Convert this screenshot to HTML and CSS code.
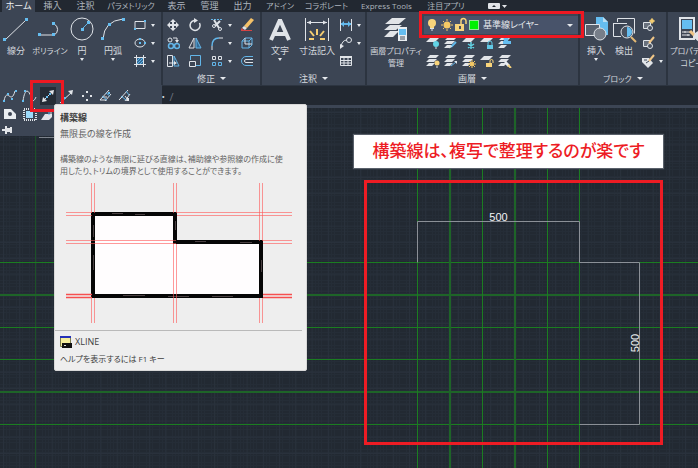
FILE: index.html
```html
<!DOCTYPE html>
<html lang="ja">
<head>
<meta charset="utf-8">
<title>構築線</title>
<link rel="stylesheet" href="styles.css">
</head>
<body>
<svg class="defs" aria-hidden="true">
  <symbol id="stack" viewBox="0 0 14 14"><path class="fw" d="M4 1h9l-3 3H1zM3 5h8l-3 3H0zM3 9h6l-3 3H0z"/></symbol>
  <symbol id="sheet" viewBox="0 0 14 14"><path class="fw" d="M4 2h9l-4 4H0z"/></symbol>
</svg>
<header class="ribbon">
  <nav class="tabs">
    <a class="tab active" href="#">ホーム</a>
    <a class="tab" href="#">挿入</a>
    <a class="tab" href="#">注釈</a>
    <a class="tab tight" href="#">パラメトリック</a>
    <a class="tab" href="#">表示</a>
    <a class="tab" href="#">管理</a>
    <a class="tab" href="#">出力</a>
    <a class="tab tight" href="#">アドイン</a>
    <a class="tab tight" href="#">コラボレート</a>
    <a class="tab tight" href="#">Express Tools</a>
    <a class="tab tight" href="#">注目アプリ</a>
    <button class="fold" aria-label="リボン"><svg width="20" height="8" viewBox="0 0 20 8"><rect class="fw" y="1" width="12" height="6" rx="1"/><path fill="#222831" d="M4 5h4L6 3z"/><path class="fw" d="M14 3h5l-2.500 3z"/></svg></button>
  </nav>
  <div class="panels">
    <section class="panel draw">
      <div class="tools">
        <button class="big w32"><svg width="26" height="26" viewBox="0 0 26 26"><path class="w" d="M2 23L23 3"/><path class="fb" d="M0 21h3v3H0zM22 1h3v3h-3z"/></svg><span>線分</span></button>
        <button class="big w36"><svg width="26" height="26" viewBox="0 0 26 26"><path class="w" d="M2 18h15a6 6 0 0 0 0-11"/><path class="fb" d="M1 16h3v3H1zM15 5h3v3h-3zM15 16h3v3h-3z"/></svg><span class="tight">ポリライン</span></button>
        <button class="big w28"><svg width="26" height="26" viewBox="0 0 26 26"><circle class="w" cx="13" cy="12" r="11"/><path class="b" d="M13 12l6-6"/><path class="fb" d="M12 11h3v3h-3zM18 4h3v3h-3z"/></svg><span>円</span><i class="caret"></i></button>
        <button class="big w34"><svg width="26" height="26" viewBox="0 0 26 26"><path class="w" d="M3 22Q4 4 23 2"/><path class="fb" d="M1 20h3v3H1zM8 6h3v3H8zM22 1h3v3h-3z"/></svg><span>円弧</span><i class="caret"></i></button>
        <div class="grid g1">
          <button><svg width="14" height="14" viewBox="0 0 14 14"><path class="w" d="M2 3.500h10v7H2z"/><path class="fb" d="M11 2h2v2h-2zM1 10h2v2H1z"/></svg><i class="caret"></i></button>
          <button><svg width="14" height="14" viewBox="0 0 14 14"><ellipse class="w" cx="7" cy="7" rx="5" ry="4"/><path class="fb" d="M6 6h2v2H6zM11 6h2v2h-2zM6 2h2v2H6z"/></svg><i class="caret"></i></button>
          <button><svg width="14" height="14" viewBox="0 0 14 14"><path fill="#356b96" d="M3 3h8v8H3z"/><path class="b" d="M3 8l5-5M3 11l8-8M6 11l5-5"/><path class="w" d="M3.500 1v12M10.500 1v12M1 3.500h12M1 10.500h12"/></svg><i class="caret"></i></button>
        </div>
      </div>
    </section>
    <section class="panel modify">
      <div class="tools">
        <div class="grid g4">
          <button aria-label="移動"><svg width="14" height="14" viewBox="0 0 14 14"><path class="w" stroke-width="2" d="M7 2v10M2 7h10"/><path class="fw" d="M7 1L4 4h6zM7 13l-3-3h6zM1 7l3-3v6zM13 7l-3-3v6z"/></svg></button>
          <button aria-label="回転"><svg width="14" height="14" viewBox="0 0 14 14"><path class="w" stroke-width="1.500" d="M6 2.500A5 5 0 1 0 11.500 5"/><path class="fw" d="M6 0l4 2.500L6 5z"/></svg></button>
          <button aria-label="トリム"><svg width="14" height="14" viewBox="0 0 14 14"><path class="b" stroke-dasharray="2 1" d="M1 1.500h12"/><path class="w" stroke-width="2" d="M4 2l5 8M10 3L5 8"/><circle class="w" cx="10" cy="11" r="1.500"/><circle class="w" cx="4" cy="8" r="1.500"/></svg><i class="caret"></i></button>
          <button aria-label="削除"><svg width="14" height="14" viewBox="0 0 14 14"><path fill="#f4c168" d="M11 0l3 2-7 8-3-2z"/><path class="fw" d="M4 8l3 2-2 2-3-2z"/><path fill="#d64343" d="M1 10l3 2-3 1z"/><path stroke="#d64343" d="M1 12.500h11"/></svg></button>
          <button aria-label="複写"><svg width="14" height="14" viewBox="0 0 14 14"><circle class="w" cx="4" cy="4" r="2"/><path class="w" d="M7 2h4v3"/><path class="fw" d="M9 4h4l-2 3z"/><circle class="b" stroke-width="1.500" cx="5" cy="10" r="2.500"/><circle class="b" stroke-width="1.500" cx="11" cy="10" r="2.500"/></svg></button>
          <button aria-label="鏡像"><svg width="14" height="14" viewBox="0 0 14 14"><path class="w" d="M6 2v10H1z"/><path class="b" fill="#356b96" d="M8 2v10h5z"/></svg></button>
          <button aria-label="フィレット"><svg width="14" height="14" viewBox="0 0 14 14"><path class="b" stroke-width="1.500" d="M2 10Q2 2 9 2"/><path class="w" d="M2 10v4M9 2h4"/></svg><i class="caret"></i></button>
          <button aria-label="分解"><svg width="14" height="14" viewBox="0 0 14 14"><path class="b" d="M2 5h7v7H2zM2 5l3-3h7L9 5M9 12l3-3V2"/><path class="w" d="M5 8h7M5 2v6"/></svg></button>
          <button aria-label="ストレッチ"><svg width="14" height="14" viewBox="0 0 14 14"><path class="w" d="M1.500 1.500h5v11h-5zM3 9h6"/><path class="b" d="M8 2l5 10H8z"/><path class="fw" d="M8 7l3 2-3 2z"/></svg></button>
          <button aria-label="尺度変更"><svg width="14" height="14" viewBox="0 0 14 14"><path class="b" d="M2.500 6V1.500h10v10H8"/><path class="w" d="M1.500 7.500h6v5h-6z"/></svg></button>
          <button aria-label="配列複写"><svg width="14" height="14" viewBox="0 0 14 14"><path class="w" d="M2.500 2.500h3v3h-3zM8.500 2.500h3v3h-3z"/><path class="b" d="M2.500 8.500h3v3h-3zM8.500 8.500h3v3h-3z"/></svg><i class="caret"></i></button>
          <button aria-label="オフセット"><svg width="14" height="14" viewBox="0 0 14 14"><path class="b" d="M13 2.500H6a4.500 4.500 0 0 0 0 9h7"/><path class="w" d="M13 5.500H6a1.500 1.500 0 0 0 0 3h7"/></svg></button>
        </div>
      </div>
      <button class="title">修正<i class="caret"></i></button>
    </section>
    <section class="panel note">
      <div class="tools">
        <button class="big w36"><svg width="26" height="26" viewBox="0 0 26 26"><path class="w" stroke-width="4" d="M4 23L12.500 4h1L22 23M7 17h12"/></svg><span>文字</span><i class="caret"></i></button>
        <button class="big w38"><svg width="26" height="26" viewBox="0 0 26 26"><path class="w" d="M1.500 1v23M24.500 1v23M3 5.500h20"/><path class="fw" d="M3 5.500l4-2v4zM23 5.500l-4-2v4z"/><path stroke="#f5ce72" stroke-width="2" d="M13 12v6M6 14l4 5M20 14l-4 5M5 22h5M21 22h-5"/></svg><span>寸法記入</span></button>
        <div class="grid g1">
          <button><svg width="14" height="14" viewBox="0 0 14 14"><path class="w" d="M1.500 1v12M12.500 1v12"/><path class="b" stroke-width="2" d="M2 6h10"/><path class="fb" d="M2 6l3-3v6zM12 6L9 3v6z"/></svg><i class="caret"></i></button>
          <button><svg width="14" height="14" viewBox="0 0 14 14"><circle class="w" cx="10" cy="4" r="2.500"/><path class="w" d="M8 4Q3 4 2 11"/><path class="fw" d="M1 13V8l4 2z"/></svg><i class="caret"></i></button>
          <button><svg width="14" height="14" viewBox="0 0 14 14"><path class="w" d="M1.500 2.500h11v9h-11zM1 6.500h12M1 9h12M5 4v8M9 4v8"/><path class="fw" d="M1 2h12v2H1z"/></svg></button>
        </div>
      </div>
      <button class="title">注釈<i class="caret"></i></button>
    </section>
    <section class="panel layer">
      <div class="tools">
        <button class="big w54"><svg width="26" height="26" viewBox="0 0 26 26"><path class="fw" d="M9 1h14l-7 6H2zM7 8h12l-6 5H1zM7 14h9l-6 6H1z"/><path fill="#e9edf1" d="M15 10h9v14h-9z"/><path class="fb" d="M16 12h7v6h-7z"/><path stroke="#49515e" d="M17 20h5M17 22h5"/></svg><span class="tight">画層プロパティ<br>管理</span></button>
        <div class="layers">
          <label class="combo">
            <svg width="48" height="16" viewBox="0 0 48 16"><circle cx="8" cy="6" r="4" fill="#f8d47b"/><path fill="#f8d47b" d="M6 8h4v3H6z"/><path class="w" d="M6 11.500h4M7 13h2"/><circle cx="23" cy="8" r="3.500" fill="#f5c965"/><path stroke="#f5c965" d="M23 2v2M23 12v2M17 8h2M27 8h2M19 4l1 1M27 4l-1 1M19 12l1-1M27 12l-1-1"/><path fill="#f8d47b" d="M31 7h9v7h-9z"/><path stroke="#f8d47b" stroke-width="1.500" fill="none" d="M37 7V4a2.200 2.200 0 0 1 5 0v3"/><path fill="#49515e" d="M35 9h2v3h-2z"/></svg>
            <i class="swatch"></i>
            <select aria-label="画層"><option>基準線レイヤｰ</option></select>
            <i class="caret"></i>
          </label>
          <div class="grid g5">
            <button><svg width="14" height="14"><use href="#sheet"/><circle cx="10" cy="8" r="3" fill="#62d3e5"/><path class="w" d="M9 12h2"/></svg></button>
            <button><svg width="14" height="14"><use href="#stack"/><path stroke="#5fb8e9" stroke-width="2" d="M7 11l5-5"/><path class="w" d="M5 12l3-2"/></svg></button>
            <button><svg width="14" height="14"><use href="#sheet"/><path stroke="#62d3e5" stroke-width="1.500" d="M9 6v7M6 8l6 4M6 12l6-4"/></svg></button>
            <button><svg width="14" height="14"><use href="#sheet"/><path fill="#62c8e5" d="M7 9h6v4H7z"/><path stroke="#62c8e5" fill="none" d="M8 9V7a2 2 0 0 1 4 0v2"/></svg></button>
            <button><svg width="14" height="14"><use href="#stack"/><circle class="fb" cx="8" cy="3" r="2.500"/><path class="fb" d="M5 5h8v3H5z"/></svg></button>
            <button><svg width="14" height="14"><use href="#stack"/><circle cx="11" cy="9" r="2.500" fill="#f8d47b"/><path class="w" d="M10 13h2"/></svg></button>
            <button><svg width="14" height="14"><use href="#stack"/><path class="b" d="M7 12l5-4"/><path class="fw" d="M10 7h3v3z"/></svg></button>
            <button><svg width="14" height="14"><use href="#stack"/><circle cx="10" cy="10" r="2" fill="#f5c965"/><path stroke="#f5c965" d="M10 6v8M6 10h8M7 7l6 6M13 7l-6 6"/></svg></button>
            <button><svg width="14" height="14"><use href="#sheet"/><path fill="#f8d47b" d="M6 9h6v4H6z"/><path stroke="#f8d47b" fill="none" d="M10 9V7a1.500 1.500 0 0 1 3 0v2"/></svg></button>
            <button><svg width="14" height="14"><use href="#stack"/><path stroke="#e9edf1" stroke-width="3" d="M7 8l4 4"/><path stroke="#f8d47b" stroke-width="2" d="M10 11l3 3"/></svg></button>
          </div>
        </div>
      </div>
      <button class="title">画層<i class="caret"></i></button>
    </section>
    <section class="panel block">
      <div class="tools">
        <button class="big w28"><svg width="26" height="26" viewBox="0 0 26 26"><path class="fb" d="M13 0h7l5 5v13H13z"/><path fill="#b8def3" d="M20 0l5 5h-5z"/><path class="w" fill="#59616e" d="M2.500 7.500h14v11h-14z"/><circle class="w" fill="#777e89" cx="17" cy="17" r="6"/></svg><span>挿入</span><i class="caret"></i></button>
        <button class="big w28"><svg width="26" height="26" viewBox="0 0 26 26"><path class="w" d="M6.500 5V1.500h17v15M2 6.500h14M2.500 6v13.500H10"/><circle class="w" fill="#49515e" cx="16" cy="15" r="6"/><path class="fb" d="M16 10a5 5 0 0 1 0 10z"/><path stroke="#e4b973" stroke-width="2" d="M20 20l5 5"/></svg><span>検出</span></button>
        <div class="grid g1">
          <button><svg width="14" height="14" viewBox="0 0 14 14"><path class="w" fill="#69717d" d="M2.500 4.500h7v6h-7z"/><circle class="w" fill="#49515e" cx="9" cy="10" r="2.500"/><circle cx="11" cy="3" r="2" fill="#f5ce72"/><path stroke="#f5ce72" d="M11 0v6M8 3h6"/></svg></button>
          <button><svg width="14" height="14" viewBox="0 0 14 14"><path class="w" fill="#69717d" d="M2.500 4.500h7v6h-7z"/><circle class="w" fill="#49515e" cx="9" cy="10" r="2.500"/><path stroke="#f0c687" stroke-width="2" d="M13 1L8 7"/></svg></button>
          <button><svg width="14" height="14" viewBox="0 0 14 14"><path class="fw" d="M1 4h7l4 5-5 5-6-6z"/><path stroke="#414b5a" d="M3 6h3M5 9l3-2"/><path stroke="#f0c687" stroke-width="2" d="M13 1L8 7"/></svg><i class="caret"></i></button>
        </div>
      </div>
      <button class="title tight">ブロック<i class="caret"></i></button>
    </section>
    <section class="panel props">
      <div class="tools">
        <button class="big w44"><svg width="26" height="26" viewBox="0 0 26 26"><path class="w" stroke-width="2" d="M3 1h14v21H3z"/><path class="fb" d="M5 3h10v9H5z"/><path class="w" d="M5 15h8M5 18h8M8 14v2M11 17v2"/><path stroke="#f0c687" stroke-width="3" d="M13 14l5 5"/><path class="fw" d="M18 16l3-2 5 6-4 5-6-5z"/></svg><span class="tight">プロパティｰ<br>コピｰ</span></button>
      </div>
    </section>
  </div>
  <div class="flyout">
    <div class="row">
      <button><svg width="16" height="16" viewBox="0 0 16 16"><path class="w" d="M2 13C5-2 9 18 13 3"/><path class="fb" d="M1 12h2v2H1zM5 5h2v2H5zM9 10h2v2H9zM13 2h2v2h-2z"/></svg></button>
      <button><svg width="16" height="16" viewBox="0 0 16 16"><path class="w" d="M2 13C4-1 8 2 10 9s4 2 5 0"/><path class="fb" d="M1 12h2v2H1zM3 2h2v2H3zM10 3h2v2h-2z"/></svg></button>
      <button class="on" aria-label="構築線"><svg width="16" height="16" viewBox="0 0 16 16"><path class="w" d="M3 13L13 3"/><path class="fw" d="M2 14l1-5 4 4zM14 2l-5 1 4 4z"/><path class="fb" d="M6 8h2v2H6zM9 5h2v2H9z"/></svg></button>
      <button><svg width="16" height="16" viewBox="0 0 16 16"><path class="w" d="M1 15L13 4"/><path class="fw" d="M14 2l-5 1 4 4z"/><path class="fb" d="M5 9h2v2H5z"/></svg></button>
      <button><svg width="16" height="16" viewBox="0 0 16 16"><path class="fw" d="M8 3h2v2H8zM4 7h2v2H4zM12 7h2v2h-2zM8 11h2v2H8z"/></svg></button>
      <button><svg width="16" height="16" viewBox="0 0 16 16"><path class="w" d="M3 12L12 2M8 13l6-7M3 12h7M5 9h5"/><path class="b" d="M5 8l5 4M9 5l4 3"/><path class="fb" d="M11 4h2v2h-2z"/></svg></button>
      <button><svg width="16" height="16" viewBox="0 0 16 16"><path class="w" d="M3 12L12 2M9 13l5-7M3 12l4-4M9 8l3 4"/><path class="b" d="M5 8l5 4M10 3l3 4"/><path class="fw" d="M11 10h2v3h-3z"/></svg></button>
    </div>
    <div class="row">
      <button><svg width="16" height="16" viewBox="0 0 16 16"><path fill="#e9edf1" fill-rule="evenodd" d="M2 3h7l5 5v5H2zM8 6a2 2 0 1 0 0 4 2 2 0 0 0 0-4z"/></svg></button>
      <button><svg width="16" height="16" viewBox="0 0 16 16"><path fill="#9ddafa" d="M5 5h7v7H5z"/><path class="w" stroke-width="2" stroke-dasharray="1 1" d="M3 3h12v11H3z"/></svg></button>
      <button><svg width="16" height="16" viewBox="0 0 16 16"><path class="fw" d="M5 8h7v3l-3 3H1z"/><path class="b" d="M9 3v6"/><path class="w" d="M11 4v6"/></svg></button>
    </div>
    <button class="pin" aria-label="ピン"><svg width="10" height="8" viewBox="0 0 10 8"><path class="fw" d="M0 3h3V0h2v2h3V1h2v6H8V6H5v2H3V5H0z"/></svg></button>
    <i class="mark mark-tool"></i>
  </div>
  <i class="mark mark-layer"></i>
</header>
<div class="filetabs"><span>・</span><span class="slash">/</span></div>
<main class="canvas">
  <svg class="plan" width="100%" height="100%">
    <defs>
      <pattern id="minor" width="13" height="13" patternUnits="userSpaceOnUse"><path stroke="#252d37" fill="none" d="M3.500 0v13M6.500 0v13M9.500 0v13M0 3.500h13M0 6.500h13M0 9.500h13"/></pattern>
      <pattern id="major" x="3" y="4" width="16.240" height="16.240" patternUnits="userSpaceOnUse"><path stroke="#29313c" fill="none" d="M.5 0v17M0 .5h17"/></pattern>
    </defs>
    <rect width="100%" height="100%" fill="url(#minor)"/>
    <rect width="100%" height="100%" fill="url(#major)"/>
    <line class="faint" x1="35.500" x2="35.500" y1="0" y2="100%"/>
    <line class="edge" x1="39" x2="54" y1="29.500" y2="29.500"/>
    <g class="guide">
      <line x1="0" x2="100%" y1="154.500" y2="154.500"/><line class="wide" x1="0" x2="100%" y1="187" y2="187"/><line x1="0" x2="100%" y1="219.500" y2="219.500"/><line x1="0" x2="100%" y1="251.500" y2="251.500"/><line class="wide" x1="0" x2="100%" y1="284" y2="284"/><line x1="0" x2="100%" y1="316.500" y2="316.500"/>
      <line x1="417.500" x2="417.500" y1="0" y2="100%"/><line class="wide" x1="450" x2="450" y1="0" y2="100%"/><line x1="482.500" x2="482.500" y1="0" y2="100%"/><line class="wide" x1="515" x2="515" y1="0" y2="100%"/><line x1="547.500" x2="547.500" y1="0" y2="100%"/><line x1="579.500" x2="579.500" y1="0" y2="100%"/>
    </g>
    <path class="dim" d="M417.500 154.500v-41h162v41h60v162h-60"/>
    <text class="size" x="498.500" y="113">500</text>
    <text class="size" transform="translate(639 235) rotate(-90)">500</text>
    <rect class="frame" x="365.500" y="73.500" width="296" height="262"/>
  </svg>
  <p class="callout">構築線は、複写で整理するのが楽です</p>
</main>
<aside class="tip" role="tooltip">
  <h1>構築線</h1>
  <p class="lead">無限長の線を作成</p>
  <p class="text tight">構築線のような無限に延びる直線は、補助線や参照線の作成に使<br>用したり、トリムの境界として使用することができます。</p>
  <svg class="figure" width="228" height="140" viewBox="0 0 228 140">
    <path fill="#fffdfe" d="M28 30h83v29h86v54H28z"/>
    <path fill="none" stroke="#060606" stroke-width="4" d="M28 31h82v28h86v54H28z"/>
    <path stroke="#4a4042" d="M47 30.500h11M70 31.500h10M130 58.500h11M175 59.500h12M58 112.500h22M103 113.500h21M147 113.500h21M28.500 42v12M28.500 72v15M110.500 38v9M196.500 77v12"/>
    <g stroke="#ff5757" stroke-opacity=".6"><path d="M26.500 0v30M29.500 0v30M26.500 115v25M29.500 115v25M108.500 0v30M111.500 0v30M108.500 61v79M111.500 61v79M194.500 0v58M197.500 0v58M194.500 115v25M197.500 115v25M1 29.500h26M1 32.500h26M112 29.500h115M112 32.500h115M1 57.500h110M1 60.500h110M198 57.500h29M198 60.500h29"/></g>
    <path stroke="#f64f4f" stroke-width="1.500" d="M1 111.500h26M1 114.500h26M198 111.500h29M198 114.500h29"/>
  </svg>
  <hr>
  <p class="cmd"><svg width="12" height="12" viewBox="0 0 12 12"><path fill="#f5ee9c" stroke="#7b7b4e" d="M.5 1.500h10v9H.500z"/><path fill="#2632b8" d="M0 0h11v2H0z"/><path fill="#111" d="M2 7h10v5H2z"/><path stroke="#ddd" d="M4 9.500h2"/></svg>XLINE</p>
  <p class="help tight">ヘルプを表示するには F1 キー</p>
</aside>
</body>
</html>
```
FILE: styles.css
```css
* { box-sizing: border-box; }
body {
  margin: 0;
  min-height: 100vh;
  display: flex;
  flex-direction: column;
  position: relative;
  overflow: hidden;
  background: #222831;
  color: #d5d9df;
  font: 9px/12px "Open Sans", "Noto Sans CJK JP", sans-serif;
  font-feature-settings: "palt";
}
p, h1 { margin: 0; }
button {
  margin: 0;
  padding: 0;
  border: 0;
  background: none;
  color: inherit;
  font: inherit;
  font-feature-settings: inherit;
}
svg { display: block; flex: none; fill: none; }
.defs { position: absolute; width: 0; height: 0; }
.w { stroke: #dfe3e8; }
.b { stroke: #62b5e8; }
.fw { fill: #e1e4e8; }
.fb { fill: #65bdf0; }
.tight { font-size: 8px; }
.caret {
  flex: none;
  width: 0;
  height: 0;
  border: 2px solid transparent;
  border-top: 3px solid #e6e9ed;
  border-bottom: 0;
}

.ribbon { position: relative; z-index: 1; background: #222831; }
.tabs {
  display: grid;
  grid-template-columns: 33px 35px 31px 60px 31px 35px 31px 44px 49px 71px 48px 56px;
  height: 12px;
  padding-left: 2px;
}
.tab {
  color: #adb4bd;
  line-height: 11px;
  text-align: center;
  text-decoration: none;
  white-space: nowrap;
}
.tab.active { background: #3c4554; color: #f0f2f4; }
.fold { display: flex; justify-content: center; align-items: center; }

.panels { display: flex; height: 74px; background: #3c4554; border-bottom: 1px solid #2d3541; }
.panel {
  flex: none;
  display: flex;
  flex-direction: column;
  justify-content: space-between;
  border-right: 2px solid #2c3440;
}
.draw { width: 163px; }
.modify { width: 99px; }
.note { width: 105px; }
.layer { width: 213px; }
.block { width: 88px; }
.props { flex: 1 0 30px; border-right: 0; }
.tools { display: flex; align-items: flex-start; height: 59px; }
.big {
  flex: none;
  display: flex;
  flex-direction: column;
  align-items: center;
  padding-top: 5px;
  white-space: nowrap;
}
.big span { margin-top: 2px; }
.big .caret { margin-top: 1px; }
.w28 { width: 28px; }
.w32 { width: 32px; }
.w34 { width: 34px; }
.w36 { width: 36px; }
.w38 { width: 38px; }
.w44 { width: 44px; }
.w54 { width: 54px; }
.grid { display: grid; grid-auto-rows: 18px; padding-top: 4px; }
.grid button { display: flex; align-items: center; gap: 4px; }
.g1 { grid-template-columns: 26px; padding-left: 3px; }
.g4 { grid-template-columns: 22px 22px 30px 20px; padding-left: 3px; }
.g5 { grid-template-columns: repeat(5, 18px); padding: 0 0 0 2px; }
.title {
  display: flex;
  justify-content: center;
  align-items: center;
  gap: 5px;
  height: 13px;
}
.title .caret { border-width: 3px 3px 0; }
.block .tools { padding-left: 2px; }
.layer .tools { padding-left: 2px; }

.layers { flex: 1; padding: 4px 0 0 1px; }
.combo {
  display: flex;
  align-items: center;
  height: 18px;
  padding-right: 5px;
  background: #48536a;
}
.swatch { flex: none; width: 10px; height: 10px; background: #00f000; border: 1px solid #9ae09a; }
.combo select {
  flex: 1;
  min-width: 0;
  appearance: none;
  border: 0;
  padding: 0 0 0 4px;
  background: none;
  color: #e6e9ed;
  font: inherit;
  font-feature-settings: inherit;
}
.combo .caret { border-width: 3px 3px 0; }
.combo svg { margin-right: -3px; }

.mark { position: absolute; border: 3px solid #ee1822; }
.mark-layer { left: 419px; top: 11px; width: 165px; height: 27px; }
.mark-tool { left: 30px; top: -5px; width: 34px; height: 32px; }

.flyout {
  position: absolute;
  left: 0;
  top: 85px;
  width: 162px;
  height: 51px;
  padding-top: 2px;
  background: #3c4554;
}
.row { display: flex; gap: 3px; height: 18px; padding-left: 2px; }
.row button { width: 16px; height: 18px; display: flex; align-items: center; }
.row .on { background: #252c36; }
.pin { display: block; padding: 3px 0 0 2px; }

.filetabs {
  display: flex;
  gap: 4px;
  height: 22px;
  padding: 5px 0 0 161px;
  border-bottom: 3px solid #3c4554;
}
.slash { color: #6b727d; font-size: 11px; }

.canvas { flex: 1; position: relative; background: #222932; }
.plan { position: absolute; inset: 0; }
.guide { stroke: #1b7d21; }
.guide .wide { stroke: #1e6428; stroke-width: 2; }
.faint { stroke: #1d5128; }
.edge { stroke: #7d838c; }
.dim { stroke: #8b9097; }
.size { fill: #f2f3f5; font: 11px "Liberation Sans", sans-serif; text-anchor: middle; }
.frame { stroke: #ee1c24; stroke-width: 3; }
.callout {
  position: absolute;
  left: 354px;
  top: 27px;
  width: 309px;
  height: 33px;
  background: #fff;
  box-shadow: 0 0 1px 1px #59606a;
  color: #ed1c24;
  font-size: 17px;
  font-weight: 500;
  line-height: 32px;
  text-align: center;
  white-space: nowrap;
}

.tip {
  position: absolute;
  z-index: 2;
  left: 54px;
  top: 104px;
  width: 253px;
  padding: 7px 4px 5px 5px;
  background: #eee;
  border: 1px solid #d8d8d8;
  border-radius: 2px;
  color: #3d3d3d;
  white-space: nowrap;
}
.tip h1 { font-size: 9px; line-height: 12px; font-weight: 700; }
.lead { margin-top: 4px; color: #626262; }
.text { margin-top: 13px; color: #626262; }
.figure { margin: 6px 0 7px 5px; }
.tip hr { margin: 0 0 5px -5px; border: 0; border-top: 1px solid #b9b9b9; }
.cmd { display: flex; align-items: center; gap: 3px; }
.help { margin-top: 5px; }
```
